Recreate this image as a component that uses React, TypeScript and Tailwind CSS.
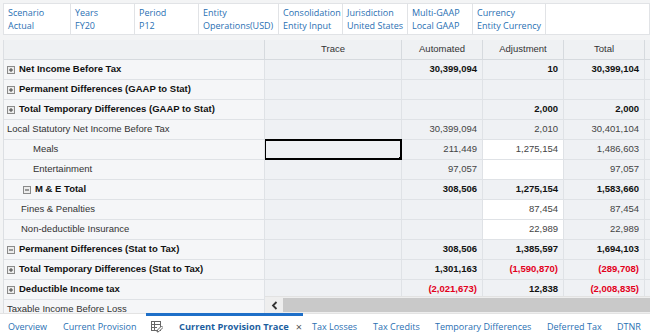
import React from "react";

type Row = {
  label: string;
  pl: number;
  icon?: "plus" | "minus";
  bold?: boolean;
  cells: string[];
  white?: boolean[];
  selected?: boolean;
};

const povItems = [
  { label: "Scenario", value: "Actual", w: 67 },
  { label: "Years", value: "FY20", w: 64 },
  { label: "Period", value: "P12", w: 64 },
  { label: "Entity", value: "Operations(USD)", w: 80 },
  { label: "Consolidation", value: "Entity Input", w: 64 },
  { label: "Jurisdiction", value: "United States", w: 65 },
  { label: "Multi-GAAP", value: "Local GAAP", w: 65 },
  { label: "Currency", value: "Entity Currency", w: 73 },
];

const rows: Row[] = [
  { label: "Net Income Before Tax", pl: 3, icon: "plus", bold: true, cells: ["", "30,399,094", "10", "30,399,104"] },
  { label: "Permanent Differences (GAAP to Stat)", pl: 3, icon: "plus", bold: true, cells: ["", "", "", ""] },
  { label: "Total Temporary Differences (GAAP to Stat)", pl: 3, icon: "plus", bold: true, cells: ["", "", "2,000", "2,000"] },
  { label: "Local Statutory Net Income Before Tax", pl: 3, cells: ["", "30,399,094", "2,010", "30,401,104"] },
  { label: "Meals", pl: 29, cells: ["", "211,449", "1,275,154", "1,486,603"], white: [false, false, true, false], selected: true },
  { label: "Entertainment", pl: 29, cells: ["", "97,057", "", "97,057"], white: [false, false, true, false] },
  { label: "M & E Total", pl: 19, icon: "minus", bold: true, cells: ["", "308,506", "1,275,154", "1,583,660"] },
  { label: "Fines & Penalties", pl: 17, cells: ["", "", "87,454", "87,454"], white: [false, false, true, false] },
  { label: "Non-deductible Insurance", pl: 17, cells: ["", "", "22,989", "22,989"], white: [false, false, true, false] },
  { label: "Permanent Differences (Stat to Tax)", pl: 3, icon: "minus", bold: true, cells: ["", "308,506", "1,385,597", "1,694,103"] },
  { label: "Total Temporary Differences (Stat to Tax)", pl: 3, icon: "plus", bold: true, cells: ["", "1,301,163", "(1,590,870)", "(289,708)"] },
  { label: "Deductible Income tax", pl: 3, icon: "plus", bold: true, cells: ["", "(2,021,673)", "12,838", "(2,008,835)"] },
  { label: "Taxable Income Before Loss", pl: 3, cells: ["", "", "", ""] },
];

const colWidths = ["w-[137px]", "w-[81px]", "w-[81px]", "w-[81px]"];
const headers = ["Trace", "Automated", "Adjustment", "Total"];

const tabsBefore = [
  { t: "Overview", w: 55 },
  { t: "Current Provision", w: 83 },
];
const tabsAfter = [
  { t: "Tax Losses", w: 61 },
  { t: "Tax Credits", w: 62 },
  { t: "Temporary Differences", w: 112 },
  { t: "Deferred Tax", w: 70 },
  { t: "DTNR", w: 30 },
];

const ExpandIcon = ({ kind }: { kind: "plus" | "minus" }) => (
  <svg width="8" height="8" viewBox="0 0 8 8" className="mr-[4px] shrink-0">
    <rect x="0.5" y="0.5" width="7" height="7" fill="#ececec" stroke="#8a8a8a" />
    <line x1="2" y1="4" x2="6" y2="4" stroke="#444" />
    {kind === "plus" && <line x1="4" y1="2" x2="4" y2="6" stroke="#444" />}
  </svg>
);

const TraceIcon = () => (
  <svg width="13" height="13" viewBox="0 0 13 13" className="mr-[16px] shrink-0">
    <rect x="1.5" y="1.5" width="9" height="9" fill="none" stroke="#666" />
    <line x1="1.5" y1="4.5" x2="10.5" y2="4.5" stroke="#666" />
    <line x1="1.5" y1="7.5" x2="7" y2="7.5" stroke="#666" />
    <line x1="4.5" y1="1.5" x2="4.5" y2="10.5" stroke="#666" />
    <path d="M7 12 L7.5 10 L11.5 6 L13 7.5 L9 11.5 Z" fill="#fff" stroke="#555" strokeWidth="0.9" />
  </svg>
);

export default function App() {
  return (
    <div className="w-[650px] h-[334px] overflow-hidden bg-[#f3f4f5] font-['Liberation_Sans',Arial,sans-serif]">
      {/* POV bar */}
      <div className="pt-[3px] pl-[3px] h-[40px]">
        <div className="flex h-[32px] bg-white border border-[#e1e3e6] font-['Open_Sans',sans-serif] text-[9px] text-[#2a70b3] leading-[13px]">
          {povItems.map((p) => (
            <div key={p.label} style={{ width: p.w }} className="shrink-0 border-r border-[#e1e3e6] pl-[4px] pt-[2px] whitespace-nowrap">
              <div>{p.label}</div>
              <div>{p.value}</div>
            </div>
          ))}
        </div>
      </div>

      {/* grid */}
      <div className="ml-[3px] flex h-[273px] text-[9.5px]">
        {/* frozen labels */}
        <div className="w-[262px] shrink-0 overflow-hidden border-l border-[#dcdfe3]">
          <div className="h-[20px] bg-[#eff1f3] border-b border-r border-[#d6dade]" />
          {rows.map((r) => (
            <div
              key={r.label}
              style={{ paddingLeft: r.pl }}
              className={
                "h-[20px] flex items-center bg-[#f5f6f8] border-b border-r border-[#dfe2e6] whitespace-nowrap " +
                (r.bold ? "font-bold text-[#111]" : "text-[#333]")
              }
            >
              {r.icon && <ExpandIcon kind={r.icon} />}
              <span>{r.label}</span>
            </div>
          ))}
        </div>

        {/* scroll pane */}
        <div className="flex-1 flex flex-col overflow-hidden">
          <div className="h-[256px] overflow-hidden">
            <div className="flex h-[20px] bg-[#eff1f3] text-[#333]">
              {headers.map((h, i) => (
                <div key={h} className={colWidths[i] + " shrink-0 flex items-center justify-center border-b border-r border-[#d6dade]"}>
                  {h}
                </div>
              ))}
              <div className="flex-1 border-b border-[#d6dade]" />
            </div>
            {rows.map((r) => (
              <div key={r.label} className="flex h-[20px]">
                {r.cells.map((c, i) => {
                  const red = c.startsWith("(");
                  const isWhite = r.white?.[i];
                  return (
                    <div
                      key={i}
                      className={
                        colWidths[i] +
                        " shrink-0 relative flex items-center justify-end pr-[5px] border-b border-r border-[#dfe2e6] " +
                        (isWhite ? "bg-white " : "bg-[#eff1f4] ") +
                        (r.bold ? "font-bold " : "") +
                        (red ? "text-[#e3001b]" : r.bold ? "text-[#111]" : "text-[#444]")
                      }
                    >
                      {c}
                      {i === 0 && r.selected && (
                        <>
                          <div className="absolute inset-[-1px] border-2 border-black" />
                          <div className="absolute right-[-3px] bottom-[-3px] w-[5px] h-[5px] bg-black" />
                        </>
                      )}
                    </div>
                  );
                })}
                <div className="flex-1 bg-[#eff1f4] border-b border-[#dfe2e6]" />
              </div>
            ))}
          </div>
          {/* horizontal scrollbar */}
          <div className="h-[17px] flex bg-[#eeeeee] border-t border-[#e2e2e2]">
            <div className="w-[18px] flex items-center justify-center">
              <svg width="7" height="9" viewBox="0 0 7 9">
                <path d="M5.5 1 L2 4.5 L5.5 8" fill="none" stroke="#333" strokeWidth="1.8" />
              </svg>
            </div>
            <div className="flex-1 my-[1px] bg-[#c9c9c9]" />
          </div>
        </div>
      </div>

      {/* tabs */}
      <div className="h-[21px] bg-white border-t border-[#e3e3e3] flex pl-[8px] font-['Open_Sans',sans-serif] text-[9px] text-[#2a70b3] whitespace-nowrap">
        {tabsBefore.map((t) => (
          <div key={t.t} style={{ width: t.w }} className="shrink-0 pt-[6px]">{t.t}</div>
        ))}
        <div className="w-[157px] shrink-0 h-[21px] flex items-start pt-[4px] pl-[4px] border-t-[3px] border-[#1e6fc8] -mt-[1px]">
          <TraceIcon />
          <span className="font-bold text-[#1d5f9f] text-[9.3px]">Current Provision Trace</span>
          <span className="ml-[7px] text-[#555] text-[11px] leading-[13px]">×</span>
        </div>
        <div className="w-[9px] shrink-0" />
        {tabsAfter.map((t) => (
          <div key={t.t} style={{ width: t.w }} className="shrink-0 pt-[6px]">{t.t}</div>
        ))}
      </div>
    </div>
  );
}
